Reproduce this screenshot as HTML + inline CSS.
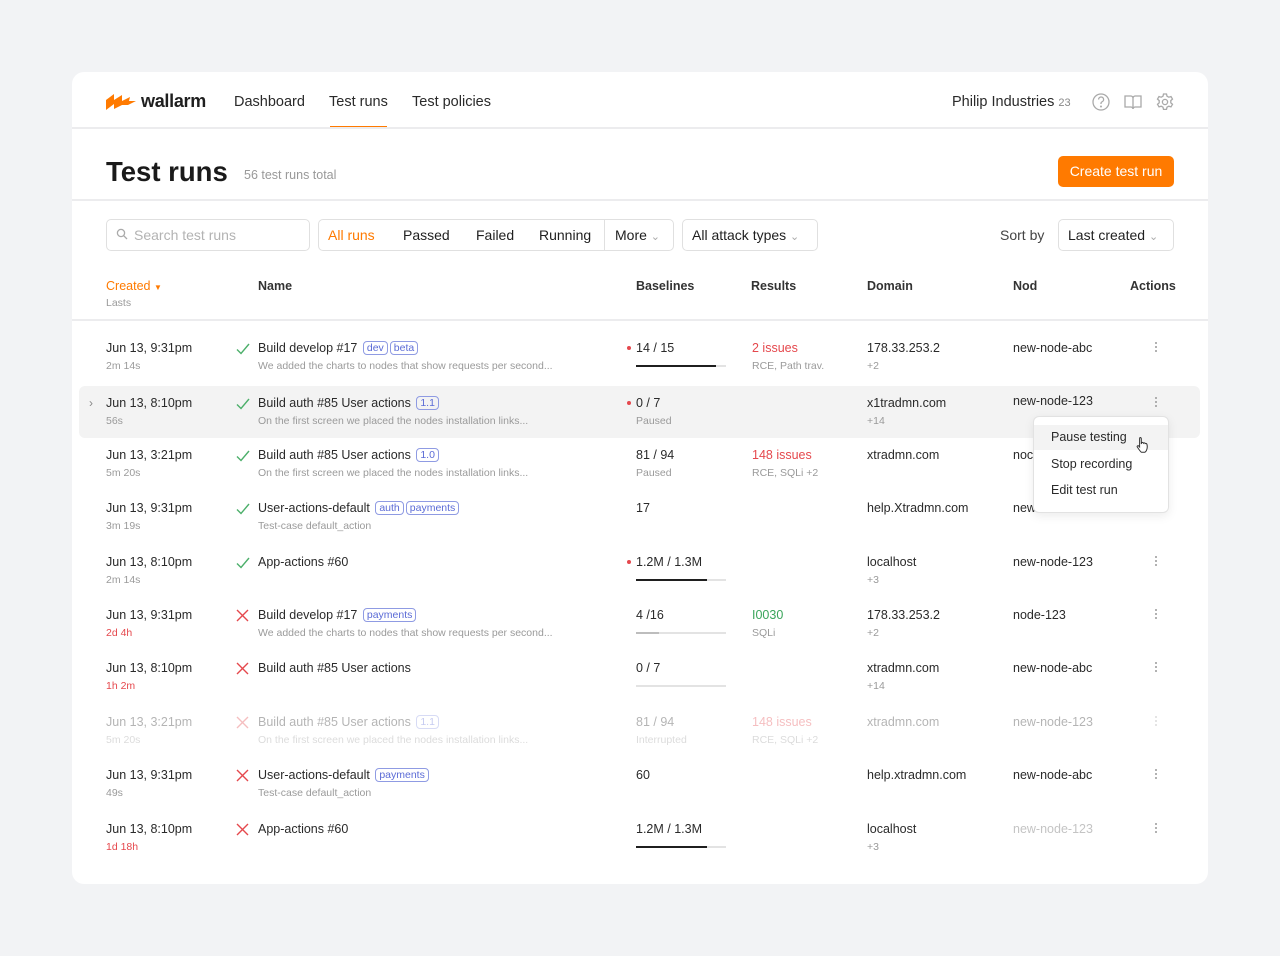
<!DOCTYPE html>
<html><head><meta charset="utf-8"><style>
*{box-sizing:border-box;margin:0;padding:0}
body{width:1280px;height:956px;background:#f2f3f5;font-family:"Liberation Sans",Arial,sans-serif;color:#1f1f1f;position:relative;overflow:hidden}
.card{position:absolute;left:72px;top:72px;width:1136px;height:812px;background:#fff;border-radius:12px}
.a{position:absolute;white-space:nowrap}
.hr{position:absolute;left:72px;width:1136px;height:2px;background:#ececee}
.nav{font-size:14.5px;color:#2a2a2a;top:94px}
.t13{font-size:12.5px;color:#2a2a2a}
.s{font-size:10.5px;color:#9a9a9a}
.red{color:#e5484d}
.tag{display:inline-block;font-size:10.5px;color:#5b6bd6;border:1px solid #8f9be3;border-radius:4px;padding:0 3px;line-height:12px;margin-left:2px;vertical-align:1px}
.bar{position:absolute;height:2px;background:#e3e3e3;width:90px;left:636px}
.bar i{display:block;height:2px;background:#1f1f1f}
.dots{position:absolute;left:1155px;width:3px}
.dots b{display:block;width:2px;height:2px;background:#9a9a9a;border-radius:1px;margin-bottom:2px}
.dot{position:absolute;left:627px;width:4px;height:4px;border-radius:2px;background:#e5484d}
.fade{opacity:.35}
</style></head><body>
<div class="card"></div>
<svg class="a" style="left:105px;top:92px" width="32" height="19" viewBox="0 0 32 19"><path d="M1 8 L9 2 L9 8 L17 3 L17 9 L25 5 L24 9 L31 9 L23 13 L17 13 L9 17 L9 12 L1 18 Z" fill="#ff7a00"/></svg>
<div class="a" style="left:141px;top:91px;font-size:18px;font-weight:bold;color:#1f1f1f;letter-spacing:-0.3px">wallarm</div>
<div class="a nav" style="left:234px">Dashboard</div>
<div class="a nav" style="left:329px">Test runs</div>
<div class="a nav" style="left:412px">Test policies</div>
<div class="a" style="left:330px;top:126px;width:57px;height:2px;background:#ff7a00"></div>
<div class="a nav" style="left:952px">Philip Industries <span style="font-size:11px;color:#888">23</span></div>
<svg class="a" style="left:1092px;top:92px" width="90" height="20" viewBox="0 0 90 20" fill="none" stroke="#a9a9a9" stroke-width="1.3">
<circle cx="9" cy="10" r="8"/><path d="M6.6 7.5a2.5 2.5 0 1 1 3.4 2.3c-.7.3-1 .8-1 1.5v.7"/><circle cx="9" cy="14.5" r=".4" fill="#a9a9a9"/>
<path d="M33 4h6c1 0 2 1 2 2v11c0-1-1-2-2-2h-6z M49 4h-6c-1 0-2 1-2 2v11c0-1 1-2 2-2h6z"/>
<circle cx="73" cy="10" r="2.6"/><path d="M71.5 2h3l.5 2.2 1.8 1 2.2-.7 1.5 2.6-1.7 1.5v2.2l1.7 1.5-1.5 2.6-2.2-.7-1.8 1-.5 2.2h-3l-.5-2.2-1.8-1-2.2.7-1.5-2.6 1.7-1.5V8.6l-1.7-1.5 1.5-2.6 2.2.7 1.8-1z"/></svg>
<div class="hr" style="top:127px"></div>
<div class="a" style="left:106px;top:156px;font-size:27.5px;font-weight:bold;color:#1a1a1a">Test runs</div>
<div class="a" style="left:244px;top:168px;font-size:12.5px;color:#999">56 test runs total</div>
<div class="a" style="left:1058px;top:156px;width:116px;height:31px;background:#ff7a00;border-radius:5px;color:#fff;font-size:14px;text-align:center;line-height:31px">Create test run</div>
<div class="hr" style="top:199px"></div>
<div class="a" style="left:106px;top:219px;width:204px;height:32px;border:1px solid #e0e0e0;border-radius:5px"></div>
<svg class="a" style="left:116px;top:228px" width="12" height="12" viewBox="0 0 12 12" fill="none" stroke="#aaa" stroke-width="1.3"><circle cx="5" cy="5" r="3.6"/><path d="M7.7 7.7L11 11"/></svg>
<div class="a" style="left:134px;top:227px;font-size:14px;color:#b3b3b3">Search test runs</div>
<div class="a" style="left:318px;top:219px;width:356px;height:32px;border:1px solid #e0e0e0;border-radius:5px"></div>
<div class="a" style="left:604px;top:220px;width:1px;height:30px;background:#e0e0e0"></div>
<div class="a" style="left:328px;top:227px;font-size:14px;color:#ff7a00">All runs</div>
<div class="a" style="left:403px;top:227px;font-size:14px">Passed</div>
<div class="a" style="left:476px;top:227px;font-size:14px">Failed</div>
<div class="a" style="left:539px;top:227px;font-size:14px">Running</div>
<div class="a" style="left:615px;top:227px;font-size:14px">More <span style="color:#aaa;font-size:11px">&#8964;</span></div>
<div class="a" style="left:682px;top:219px;width:136px;height:32px;border:1px solid #e0e0e0;border-radius:5px"></div>
<div class="a" style="left:692px;top:227px;font-size:14px">All attack types <span style="color:#aaa;font-size:11px">&#8964;</span></div>
<div class="a" style="left:1000px;top:227px;font-size:14px;color:#444">Sort by</div>
<div class="a" style="left:1058px;top:219px;width:116px;height:32px;border:1px solid #e0e0e0;border-radius:5px"></div>
<div class="a" style="left:1068px;top:227px;font-size:14px">Last created <span style="color:#aaa;font-size:11px">&#8964;</span></div>
<div class="a" style="left:106px;top:279px;font-size:12.5px;color:#ff7a00">Created <span style="font-size:8px">&#9660;</span></div>
<div class="a s" style="left:106px;top:297px">Lasts</div>
<div class="a" style="left:258px;top:279px;font-size:12.5px;font-weight:bold;color:#333">Name</div>
<div class="a" style="left:636px;top:279px;font-size:12.5px;font-weight:bold;color:#333">Baselines</div>
<div class="a" style="left:751px;top:279px;font-size:12.5px;font-weight:bold;color:#333">Results</div>
<div class="a" style="left:867px;top:279px;font-size:12.5px;font-weight:bold;color:#333">Domain</div>
<div class="a" style="left:1013px;top:279px;font-size:12.5px;font-weight:bold;color:#333">Nod</div>
<div class="a" style="left:1130px;top:279px;font-size:12.5px;font-weight:bold;color:#333">Actions</div>
<div class="hr" style="top:319px"></div>
<div class="a" style="left:79px;top:386px;width:1121px;height:52px;background:#f3f3f3;border-radius:6px"></div>
<div class="a" style="left:89px;top:396px;font-size:12px;color:#888">&#8250;</div>

<div id="rows"></div>
<script>
const ok='<svg width="14" height="12" viewBox="0 0 14 12"><path d="M1 6.5L5 10.5L13 1" fill="none" stroke="#4caf6a" stroke-width="1.4"/></svg>';
const no='<svg width="13" height="13" viewBox="0 0 13 13"><path d="M1 1L12 12M12 1L1 12" fill="none" stroke="#e5484d" stroke-width="1.4"/></svg>';
const R=[
[348,'Jun 13, 9:31pm','2m 14s',0,ok,'Build develop #17',['dev','beta'],'We added the charts to nodes that show requests per second...',1,'14 / 15','',[716,1],'2 issues','RCE, Path trav.','178.33.253.2','+2','new-node-abc',0],
[403,'Jun 13, 8:10pm','56s',0,ok,'Build auth #85 User actions',['1.1'],'On the first screen we placed the nodes installation links...',1,'0 / 7','Paused',null,'','','x1tradmn.com','+14','new-node-123',0],
[455,'Jun 13, 3:21pm','5m 20s',0,ok,'Build auth #85 User actions',['1.0'],'On the first screen we placed the nodes installation links...',0,'81 / 94','Paused',null,'148 issues','RCE, SQLi +2','xtradmn.com','','noc',0],
[508,'Jun 13, 9:31pm','3m 19s',0,ok,'User-actions-default',['auth','payments'],'Test-case default_action',0,'17','',null,'','','help.Xtradmn.com','','new',0],
[562,'Jun 13, 8:10pm','2m 14s',0,ok,'App-actions #60',[],'',1,'1.2M / 1.3M','',[707,1],'','','localhost','+3','new-node-123',0],
[615,'Jun 13, 9:31pm','2d 4h',1,no,'Build develop #17',['payments'],'We added the charts to nodes that show requests per second...',0,'4 /16','',[659,0],'I0030','SQLi','178.33.253.2','+2','node-123',0],
[668,'Jun 13, 8:10pm','1h 2m',1,no,'Build auth #85 User actions',[],'',0,'0 / 7','',[636,0],'','','xtradmn.com','+14','new-node-abc',0],
[722,'Jun 13, 3:21pm','5m 20s',0,no,'Build auth #85 User actions',['1.1'],'On the first screen we placed the nodes installation links...',0,'81 / 94','Interrupted',null,'148 issues','RCE, SQLi +2','xtradmn.com','','new-node-123',1],
[775,'Jun 13, 9:31pm','49s',0,no,'User-actions-default',['payments'],'Test-case default_action',0,'60','',null,'','','help.xtradmn.com','','new-node-abc',0],
[829,'Jun 13, 8:10pm','1d 18h',1,no,'App-actions #60',[],'',0,'1.2M / 1.3M','',[707,1],'','','localhost','+3','new-node-123',2]];
let h='';
R.forEach((r,i)=>{const[y,d,dd,rd,ic,n,tags,desc,dot,b,bs,bar,res,rs,dom,ds,node,f]=r;
const t=y-7,s=y+12;const F=f==1?' fade':'';
h+=`<div class="a t13${F}" style="left:106px;top:${t}px">${d}</div><div class="a s${F} ${rd?'red':''}" style="left:106px;top:${s}px">${dd}</div>`;
h+=`<div class="a${F}" style="left:236px;top:${t+1}px">${ic}</div>`;
h+=`<div class="a t13${F}" style="left:258px;top:${t}px">${n} ${tags.map(x=>'<span class="tag">'+x+'</span>').join('')}</div>`;
if(desc)h+=`<div class="a s${F}" style="left:258px;top:${s}px">${desc}</div>`;
if(dot)h+=`<div class="dot${F}" style="top:${y-2}px"></div>`;
h+=`<div class="a t13${F}" style="left:636px;top:${t}px">${b}</div>`;
if(bs)h+=`<div class="a s${F}" style="left:636px;top:${s}px">${bs}</div>`;
if(bar)h+=`<div class="bar" style="top:${y+17}px"><i style="width:${bar[0]-636}px;background:${bar[1]?'#1f1f1f':'#bdbdbd'}"></i></div>`;
if(res)h+=`<div class="a t13${F}" style="left:752px;top:${t}px;color:${res=='I0030'?'#3aa55b':'#e5484d'}">${res}</div><div class="a s${F}" style="left:752px;top:${s}px">${rs}</div>`;
h+=`<div class="a t13${F}" style="left:867px;top:${t}px">${dom}</div>`;
if(ds)h+=`<div class="a s${F}" style="left:867px;top:${s}px">${ds}</div>`;
h+=`<div class="a t13${F}" style="left:1013px;top:${i==1?t-2:t}px;${f==2?'color:#c4c4c4':''}">${node}</div>`;
h+=`<div class="dots${F}" style="top:${(i==1?y-6:y-6)}px"><b></b><b></b><b></b></div>`;
});
document.getElementById('rows').innerHTML=h;
</script>
<div class="a" style="left:1033px;top:416px;width:136px;height:97px;background:#fff;border:1px solid #e2e2e2;border-radius:6px;box-shadow:0 3px 10px rgba(0,0,0,.08)"></div>
<div class="a" style="left:1034px;top:425px;width:134px;height:25px;background:#f3f3f3"></div>
<div class="a t13" style="left:1051px;top:430px">Pause testing</div>
<div class="a t13" style="left:1051px;top:457px">Stop recording</div>
<div class="a t13" style="left:1051px;top:483px">Edit test run</div>
<svg class="a" style="left:1136px;top:436px" width="14" height="17" viewBox="0 0 14 17"><path d="M4 1.5c.8 0 1.3.5 1.3 1.3V8l.3-1.3c.6-.5 1.6-.3 1.8.5.5-.6 1.6-.4 1.8.4.6-.4 1.6-.1 1.7.7.6 2 .5 4-.4 6-.5 1.2-1 1.7-1.7 2H5.5C4.5 16 3 13.5 1.3 11c-.6-.9.6-1.8 1.4-1l.9 1V2.8c0-.8.4-1.3.4-1.3z" fill="#fff" stroke="#333" stroke-width="1"/></svg>
</body></html>
